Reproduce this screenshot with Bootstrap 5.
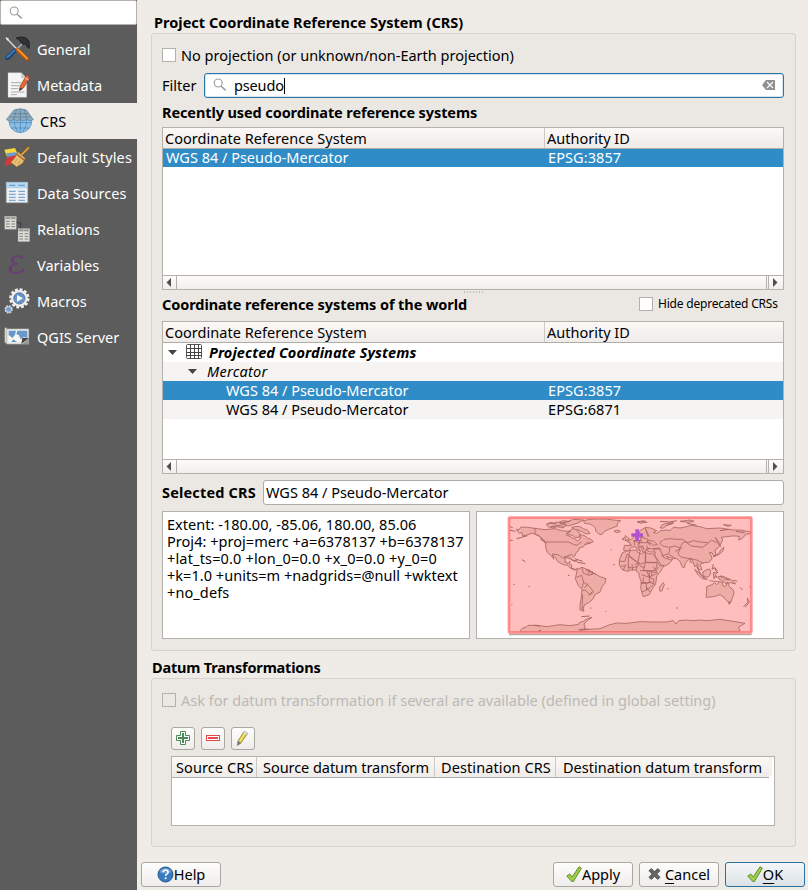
<!DOCTYPE html>
<html lang="en">
<head>
<meta charset="utf-8">
<title>Project Properties | CRS</title>
<link href="https://cdn.jsdelivr.net/npm/bootstrap@5.3.0/dist/css/bootstrap.min.css" rel="stylesheet">
<style>
body{width:808px;height:890px;overflow:hidden;background:#efebe7;color:#000;font:14.5px/18px "Noto Sans","Open Sans",sans-serif}
.side{width:137px;background:#5c5c5c;color:#fff;flex:none}
.side-search{width:137px;height:25px;border:1px solid #b6b1ab;border-radius:2px;background:#fff;padding-left:8px}
.side-list{margin-top:6px}
.side-item{height:36px;padding-left:3px;gap:6px;white-space:nowrap}
.side-item svg{width:28px;height:28px;flex:none}
.side-item.on{background:#efebe7;color:#000;padding-left:6px}
.pane{width:671px;padding:13px 12px 0 14px}
.ttl{height:20px;padding-left:3px}
.t{white-space:nowrap;display:inline-block}
.grp{border:1px solid #d6d2cd;border-radius:3px;background:#ebe8e3;padding:0 11px 0 10px}
.box{width:14px;height:14px;border:1px solid #b4b0ac;background:#fff;flex:none}
.fld{height:25px;border:1px solid #aeaaa5;border-radius:3px;background:#fff}
.fld.act{border-color:#2a76a8;box-shadow:inset 0 0 0 1px #d5e4ee}
.grid{border:1px solid #b4b0ac;background:#fff}
.hd{height:21px;background:linear-gradient(#fbf8f6,#eeebe8);border-bottom:1px solid #b0aca8;flex:none}
.hd>div{height:20px;border-right:1px solid #ccc8c4;padding-left:2px;line-height:20px}
.hd>div:last-child{border-right:0}
.rw{height:19px;line-height:19px}
.r18{height:18px;line-height:16px}
.c1{width:382px;flex:none}
.p3{padding-left:3px}
.p63{padding-left:63px}
.alt{background:#f6f4f2}
.sel{background:#308cc6;color:#fff}
.sb{height:14px;border-top:1px solid #b4b0ac;background:linear-gradient(#fdfcfb,#f1efec)}
.sb .l,.sb .r{width:14px;border-right:1px solid #b4b0ac}
.sb .r{width:17px;border-right:0;border-left:1px solid #b4b0ac;padding-left:1px}
.sb .r i{width:1px;height:13px;background:#b4b0ac;margin-right:4px;flex:none}
.sb svg{display:block;flex:none}
.ink{border:1px solid #aaa6a1;border-radius:3px;background:linear-gradient(#fdfdfc,#efedeb)}
.tool{width:24px;height:23px}
.dlg{width:80px;height:25px;padding-bottom:1px}
.dlg.def{border-color:#2a6f9e;background:linear-gradient(#f4f6f7,#dbe3e8)}
.dots{height:2px;width:19px;margin-top:1px;background:repeating-linear-gradient(90deg,#c2beb9 0 1px,transparent 1px 3px)}
u{text-underline-offset:3px;text-decoration-thickness:1px}
.g1{height:618px;padding-top:14px}
.r-np{height:14px;gap:5px}
.r-filter{height:25px;margin-top:11px}
.r-filter .k2{width:42px;padding-bottom:1px}
.fld .t{padding-bottom:1px}
.mag{margin:0 7px 1px 8px}
.caret{width:1px;height:16px;background:#000}
.clr{margin:0 8px 1px 0}
.r-rec{height:29px;padding-top:5px}
.tab1{height:163px}
.tab2{height:153px}
.r-wld{height:22px;margin-bottom:6px}
.r-wld .box{margin-right:5px}
.r-sel{height:25px;margin-top:6px}
.r-sel>.t{padding-bottom:1px}
.selfld{width:521px;padding-left:2px}
.r-info{height:128px;margin-top:6px}
.info{width:308px;padding:4px 0 0 4px;line-height:17px}
.mapbox{width:308px}
.r-dat{height:27px;padding:7px 0 0 1px}
.g2{height:169px;padding-top:14px}
.r-ask{height:14px;gap:5px;color:#bcb8b5}
.r-tools{margin:20px 0 6px 9px;gap:6px}
.tab3{width:604px;height:70px;margin-left:9px}
.tab3 .hd{width:597px;box-shadow:4px -1px 0 -1px #f4f1ef}
.tab3 .h1c{width:85px;padding-left:4px}
.tab3 .h2c{width:178px;padding-left:6px}
.tab3 .h3c{width:121px;padding-left:6px}
.tab3 .h4c{padding-left:7px}
.r-btn{margin:15px -9px 0 -10px;gap:6px}
/* per-label tracking */
.ks{letter-spacing:.14px}
.k0{letter-spacing:.02px}
.k3{letter-spacing:-.15px}
.k4{letter-spacing:-.1px}
.k5{letter-spacing:.04px}
.k8{letter-spacing:.08px}
.k9{letter-spacing:-.08px}
.k10{width:126px;font-size:12px;letter-spacing:-.2px;padding-bottom:1px}
.k11{letter-spacing:.09px}
.k12{letter-spacing:.25px}
.k13{letter-spacing:.17px}
.k14{letter-spacing:.03px}
.k15{letter-spacing:.04px}
.k16{letter-spacing:.16px}
.k18{letter-spacing:.1px}
.k19{letter-spacing:-.19px}
.k21{letter-spacing:.1px}
.k22{letter-spacing:-.05px}
</style>
</head>
<body>
<div class="d-flex h-100">
<aside class="side d-flex flex-column">
 <div class="side-search d-flex align-items-center"><svg width="14" height="14" viewBox="0 0 14 14" fill="none" stroke="#999" stroke-width="1.1"><circle cx="5.2" cy="5" r="4"/><path d="M8.2 8.2 12.7 12.4" stroke-width="1.5"/></svg></div>
 <div class="side-list">
  <div class="side-item d-flex align-items-center"><svg viewBox="9 105 84 84"><path d="M18 113 54 151" stroke="#ddd" stroke-width="4"/><path d="M17 112l10 4-5 6z" fill="#eee"/><path d="M70 128 48 150" stroke="#aaa" stroke-width="5"/><path d="M44 152 22 174" stroke="#173f70" stroke-width="13" stroke-linecap="round"/><path d="M44 151 22 172" stroke="#3d79bd" stroke-width="6" stroke-linecap="round"/><path d="M53 150 81 177" stroke="#c85500" stroke-width="11" stroke-linecap="round"/><path d="M54 148 81 175" stroke="#ff9a2c" stroke-width="5" stroke-linecap="round"/><path d="M48 114q16-6 29-1 9 5 11 14v18l-8-5-3-9-8 3-8-8-4-7z" fill="#2e3436" stroke="#151819" stroke-width="2"/></svg><span class="t">General</span></div>
  <div class="side-item d-flex align-items-center"><svg viewBox="9 213 84 84"><path d="M24 218h40l16 17v57H24z" fill="#f5f5f5" stroke="#bbb"/><path d="M63 218v17h17z" fill="#ccc"/><path d="M33 248h30M33 257h26M33 266h22M33 276h40M33 284h18" stroke="#aaa" stroke-width="3"/><path d="M80 225 61 257 58 272 71 263 90 232z" fill="#e06a35" stroke="#943a18" stroke-width="2"/><path d="M75 234 86 240" stroke="#ffd2b6" stroke-width="3"/><path d="m58 272 2-9 7 4z" fill="#333"/></svg><span class="t">Metadata</span></div>
  <div class="side-item on d-flex align-items-center"><svg viewBox="18 321 84 84"><circle cx="61" cy="364" r="34" fill="#8dc0e8" stroke="#4b8cc0" stroke-width="2"/><path d="M27 368h68M33 384h56M61 340v58M42 360q0 22 12 36M80 360q0 22-12 36" fill="none" stroke="#417fb1" stroke-width="2"/><path d="M42 330q19-7 37 0l21 29-11 3-9-4-10 5-9-4-10 4-9-5-11 5-12-4z" fill="#90abbb" stroke="#537c98" stroke-width="2"/><path d="M36 341h50M28 351h65M61 328v31M50 328l-9 30M72 328l9 30" fill="none" stroke="#537c98" stroke-width="2"/></svg><span class="t">CRS</span></div>
  <div class="side-item d-flex align-items-center"><svg viewBox="9 429 84 84"><path d="M13 449l32-5 8 18-33 7z" fill="#f5d63c"/><path d="M19 460l30-3 4 14-30 7z" fill="#6a9bd2"/><path d="M22 471l26-5-2 24-33 7z" fill="#d93636"/><path d="M64 465 86 443" stroke="#8a5d18" stroke-width="9" stroke-linecap="round"/><path d="M64 465 85 444" stroke="#dfa94e" stroke-width="5" stroke-linecap="round"/><path d="M54 455 76 475 68 490 50 501 32 487 43 475z" fill="#e6bd75" stroke="#8a602b" stroke-width="2"/><path d="m49 461 23 19" stroke="#9c5f34" stroke-width="4"/><path d="M44 487l8-10M53 492l7-9" stroke="#b98c49" stroke-width="2"/></svg><span class="t ks">Default Styles</span></div>
  <div class="side-item d-flex align-items-center"><svg viewBox="9 12 84 84"><path d="M19 22h64v61H19z" fill="#eef0f1" stroke="#aeb4b8" stroke-width="2"/><path d="M19 22h64v16H19z" fill="#b6d8f0" stroke="#6fa7cf" stroke-width="1"/><path d="M28 31h18M55 31h20" stroke="#588fc0" stroke-width="3"/><path d="M27 49h20M27 58h20M27 67h20M27 76h20M55 49h20M55 58h20M55 67h20M55 76h20" stroke="#7ba8d4" stroke-width="3.500"/></svg><span class="t">Data Sources</span></div>
  <div class="side-item d-flex align-items-center"><svg viewBox="9 120 84 84"><path d="M49 143h13v22" fill="none" stroke="#333f4c" stroke-width="3"/><g id="tb"><path d="M14 124h35v39H14z" fill="#deded9" stroke="#888"/><path d="M14 124h35v9H14z" fill="#b9b9b4"/><path d="M18 129h11M34 129h11M18 139h11M34 139h11M18 147h11M34 147h11M18 155h11M34 155h11" stroke="#85857f" stroke-width="3"/></g><use href="#tb" x="40" y="37"/></svg><span class="t">Relations</span></div>
  <div class="side-item d-flex align-items-center"><svg viewBox="9 228 84 84"><path d="M67 251q-5-9-17-8-15 2-14 13 2 10 17 11-23 1-24 14 1 14 18 14 16-1 22-11" fill="none" stroke="#6a3a78" stroke-width="5"/><path d="M38 250v12M32 276v12" stroke="#6a3a78" stroke-width="6"/><path d="M66 242v11M70 280l-3 10" stroke="#6a3a78" stroke-width="4"/></svg><span class="t">Variables</span></div>
  <div class="side-item d-flex align-items-center"><svg viewBox="9 336 84 84"><ellipse cx="66" cy="397" rx="22" ry="5" fill="#444" opacity=".4"/><circle cx="58" cy="370" r="26" fill="none" stroke="#eee" stroke-width="9" stroke-dasharray="8.5 5.1"/><circle cx="58" cy="370" r="21" fill="#6794c9" stroke="#eee" stroke-width="8"/><circle cx="58" cy="370" r="17" fill="none" stroke="#365f96" stroke-width="2"/><path d="m51 360 18 10-18 10z" fill="#fff"/><circle cx="26" cy="403" r="10" fill="#6794c9" stroke="#ddd" stroke-width="5" stroke-dasharray="5 2.8"/><circle cx="26" cy="403" r="8" fill="#6e9dd2" stroke="#ddd" stroke-width="2"/></svg><span class="t">Macros</span></div>
  <div class="side-item d-flex align-items-center"><svg viewBox="9 444 84 84"><path d="M14 458h7v3h66v47H21l-7-6z" fill="#e9e9e6" stroke="#777" stroke-width="2"/><path d="M26 467h56v34H26z" fill="#f7f7f5"/><path d="M26 467h22l-3 12-8 10-11-9zM52 467h30v21l-11-3-9 8-5-12-8-4zM34 501l6-8 11 8z" fill="#6797cb"/><path d="M20 461v46" stroke="#999" stroke-width="2"/><path d="M64 507 67 488 87 489z" fill="#444"/><path d="M67 507 87 489v18z" fill="#999"/></svg><span class="t">QGIS Server</span></div>
 </div>
</aside>
<main class="pane d-flex flex-column">
 <div class="fw-bold ttl"><span class="t k0">Project Coordinate Reference System (CRS)</span></div>
 <section class="grp g1">
  <div class="d-flex align-items-center r-np"><span class="box"></span><span class="t">No projection (or unknown/non-Earth projection)</span></div>
  <div class="d-flex align-items-center r-filter"><span class="t k2">Filter</span><div class="fld act d-flex align-items-center flex-grow-1"><svg class="mag" width="14" height="14" viewBox="0 0 14 14" fill="none" stroke="#999" stroke-width="1.1"><circle cx="5.2" cy="5" r="4"/><path d="M8.2 8.2 12.7 12.4" stroke-width="1.5"/></svg><span class="t k3">pseudo</span><span class="caret"></span><svg class="ms-auto clr" width="13" height="10" viewBox="0 0 13 10"><path d="M4 0h9v10H4L0 5z" fill="#8f8f8f"/><path d="m5 2 6 6m0-6-6 6" stroke="#fff" stroke-width="1.1"/></svg></div></div>
  <div class="fw-bold r-rec"><span class="t k4">Recently used coordinate reference systems</span></div>
  <div class="grid d-flex flex-column tab1">
   <div class="hd d-flex"><div class="c1"><span class="t k5">Coordinate Reference System</span></div><div><span class="t">Authority ID</span></div></div>
   <div class="rw sel d-flex r18"><div class="c1 p3"><span class="t">WGS 84 / Pseudo-Mercator</span></div><div class="p3"><span class="t k8">EPSG:3857</span></div></div>
   <div class="sb mt-auto d-flex"><div class="l"><svg width="13" height="13" viewBox="0 0 13 13"><path d="M8 2v9L3.500 6.500z" fill="#505050"/></svg></div><div class="r ms-auto d-flex"><i></i><svg width="9" height="13" viewBox="0 0 9 13"><path d="M0 2v9l4.500-4.500z" fill="#505050"/></svg></div></div>
  </div>
  <div class="dots mx-auto"></div>
  <div class="d-flex align-items-center r-wld"><b class="t k9">Coordinate reference systems of the world</b><span class="box ms-auto"></span><span class="t k10">Hide deprecated CRSs</span></div>
  <div class="grid d-flex flex-column tab2">
   <div class="hd d-flex"><div class="c1"><span class="t k5">Coordinate Reference System</span></div><div><span class="t">Authority ID</span></div></div>
   <div class="rw d-flex align-items-center"><svg width="46" height="19" viewBox="0 0 46 19"><path d="M5 7h9l-4.500 5z" fill="#444"/><rect x="23.500" y="1.500" width="15" height="14" rx="1" fill="#fff" stroke="#555"/><path d="M27.500 1v15M31.500 1v15M35.500 1v15M23 5.500h16M23 9.500h16M23 12.500h16" stroke="#444"/></svg><b class="t k11 fst-italic">Projected Coordinate Systems</b></div>
   <div class="rw alt d-flex align-items-center"><svg width="44" height="19" viewBox="0 0 44 19"><path d="M25 7h9l-4.500 5z" fill="#444"/></svg><i class="t k12">Mercator</i></div>
   <div class="rw sel d-flex"><div class="c1 p63"><span class="t">WGS 84 / Pseudo-Mercator</span></div><div class="p3"><span class="t k8">EPSG:3857</span></div></div>
   <div class="rw alt d-flex"><div class="c1 p63"><span class="t">WGS 84 / Pseudo-Mercator</span></div><div class="p3"><span class="t k8">EPSG:6871</span></div></div>
   <div class="sb mt-auto d-flex"><div class="l"><svg width="13" height="13" viewBox="0 0 13 13"><path d="M8 2v9L3.500 6.500z" fill="#505050"/></svg></div><div class="r ms-auto d-flex"><i></i><svg width="9" height="13" viewBox="0 0 9 13"><path d="M0 2v9l4.500-4.500z" fill="#505050"/></svg></div></div>
  </div>
  <div class="d-flex align-items-center r-sel"><b class="t k13">Selected CRS</b><div class="fld ms-auto d-flex align-items-center selfld"><span class="t">WGS 84 / Pseudo-Mercator</span></div></div>
  <div class="d-flex justify-content-between r-info">
   <div class="grid info"><div><span class="t k14">Extent: -180.00, -85.06, 180.00, 85.06</span></div><div><span class="t k15">Proj4: +proj=merc +a=6378137 +b=6378137</span></div><div><span class="t k16">+lat_ts=0.0 +lon_0=0.0 +x_0=0.0 +y_0=0</span></div><div><span class="t k15">+k=1.0 +units=m +nadgrids=@null +wktext</span></div><div><span class="t k18">+no_defs</span></div></div>
   <div class="grid mapbox"><svg class="d-block" width="306" height="126" viewBox="-69 12 918 378">
    <path d="M27 379H755" stroke="#b9aaa0" stroke-width="5"/>
    <rect x="26" y="29" width="728" height="344" fill="#ffbebe"/>
    <g fill="#efaba5" stroke="#a8655f" stroke-width="2.500" stroke-linejoin="round">
     <path d="M50 63 57 66 62 58 75 57 105 61 135 65 165 62 185 68 205 70 222 60 232 64 234 72 240 76 238 88 226 88 218 82 204 80 202 76 212 70 204 72 198 80 214 88 228 94 232 100 238 95 242 88 240 80 252 82 262 90 272 94 280 101 268 106 262 103 256 108 250 116 238 120 236 128 228 134 226 142 220 148 216 140 205 142 196 150 195 162 204 166 210 160 208 168 216 172 214 180 226 184 232 182 225 187 210 180 204 172 190 170 172 160 168 150 157 141 162 154 154 144 142 133 137 118 137 103 120 85 104 78 94 76 84 80 68 84 66 74 58 76 52 70z"/>
     <path d="M105 60v18l12 6 20 18H205l18 8 8 2 10-8 4-2M156 138l20 3 14 10 6-2" fill="none"/>
     <path d="M140 50 150 44 160 48 168 42 178 44 186 48 195 46 198 54 186 60 172 56 158 60 144 56zM178 42 190 38 205 40 220 34 250 36 240 42 225 48 216 50 205 54 190 49zM215 58 226 56 238 55 250 62 262 66 270 76 258 78 248 72 235 66 224 64z"/>
     <path d="M250 38 270 34 290 33 320 33 340 36 362 38 352 46 352 54 342 58 326 64 314 70 306 80 296 78 288 70 286 60 278 52 268 48 254 46z"/>
     <path d="M342 69l14-3 5 5-12 3zM192 147l14-3 10 10-8-2zM214 155l18 4-9 1z"/>
     <path d="M232 184 246 178 256 182 268 186 276 192 290 200 300 206 318 212 316 224 306 236 302 248 298 254 286 258 280 270 274 278 266 284 254 290 250 300 252 310 240 306 240 290 244 268 246 244 236 234 226 212z"/>
     <path d="M246 178l4 18 18 6 14-6 8 4M229 208l16-6 6 20 16 12 14 18-10 8-16-14-8 2M248 260l-2 46M251 222l-6 20M268 186l-2 14M278 190l-2 10M254 240l10-14M276 252l-12 12" fill="none"/>
     <path d="M60 369 68 360 78 358 84 352 110 352 140 356 180 350 210 353 235 349 238 344 250 340 262 332 276 328 262 338 252 348 256 362 240 366 300 362 330 350 350 345 380 346 420 341 460 342 500 342 520 338 528 348 536 338 560 336 580 338 600 336 620 338 660 334 680 337 700 340 735 346 715 358 720 367 720 370 60 371z"/>
     <path d="M371 127 373 112 390 113 390 104 380 100 394 94 402 86 410 84 418 88 430 86 420 80 418 70 436 58 452 60 470 68 460 74 470 76 482 68 500 66 510 68 520 58 540 60 560 56 572 52 600 56 620 62 660 60 700 66 720 66 754 72 750 78 738 78 730 88 722 94 716 96 718 86 710 84 696 84 680 86 664 88 668 96 662 108 654 120 645 126 648 142 642 146 636 134 628 134 634 144 636 152 628 162 605 166 600 170 606 184 598 186 590 172 584 176 578 158 570 152 564 156 556 166 552 180 546 176 540 160 530 152 514 150 508 148 500 144 510 156 518 154 506 168 490 176 484 172 474 156 464 142 466 132 450 132 440 128 450 120 438 124 436 132 428 132 424 120 414 116 422 130 412 124 406 116 394 118 384 130z"/>
     <path d="M374 98l10-2 4-4-8-6-4-4-2 8 4 4zM366 94l6-4-1 6z"/>
     <path d="M412 42l20-4 6 4-16 4zM480 60 486 50 500 46 520 44 504 50 490 60zM540 40l30-4 12 4-20 3zM670 50l24 2-10 3zM645 88 655 100 662 116 658 112zM640 146 656 136 662 126 672 118 668 130 656 140z"/>
     <path d="M367 134 380 130 390 127 410 126 412 132 424 138 432 132 450 138 462 138 466 148 474 164 480 174 492 172 482 190 470 204 468 222 464 232 456 244 448 260 430 266 426 254 422 240 424 222 418 206 416 194 404 186 392 186 384 190 368 186 358 172 358 156z"/>
     <path d="M357 160h18l6-22 34 26v10l-18 6-12-2v-32M390 127l-4 18 34 24 16-6v-30M420 130l-6 34M437 136v28h34M437 163h34M436 163l-6 24 20 2 20 6M420 188h28v36h-26M450 189l16-2 6-22M424 226l14 0 2 20-14 6M440 246l20-16M448 222l18 8M424 200l26 8M378 168l-8 18M396 168l2 20M404 170l16-5M440 188l8 20 18-10M458 176l10 12M430 208v18M410 176l-2 12M386 172v14M362 174h12M448 208l14 6-2 12M438 226l18-4M440 238l10 14M420 174l14 6M476 176l-8 12 4 10M456 190l-2 14" fill="none"/>
     <path d="M478 238 490 224 493 230 486 248 480 250zM584 184 594 192 602 200 612 210 622 214 606 212 594 200zM608 192l14-8 8 0 2 14-8 10-14-4zM640 194l14-2-8 8 6 8-8-2-2 6zM640 168l-4 16 8-4 6 12M655 206l12-2 14 6 14 6 12 12-16-4-12 4-14-12-8-2zM628 218l34 4"/>
     <path d="M620 236 636 230 644 224 650 230 658 222 668 222 668 232 676 236 682 222 688 236 700 246 702 258 696 272 694 280 686 282 676 274 672 268 660 260 640 266 618 268 620 254zM684 284l8 0-4 5zM730 296l14-14-2-12 6 12-12 16"/>
     <path d="M486 100 492 94 512 92 530 94 548 94 560 104 570 102 580 98 600 102 626 104 634 96 650 104M484 98l-4 8 8 8 18 4 20-4 14 6 8-16 12-4M540 120l-6 18 10 10 26 4 20 4 20 10M560 104l14 10 34 4 16-12M510 118l-4 20 20 14M480 122l10 26 16 6M484 144l20-6M412 112l10-8 20 0 10 8M424 104l-2-16 22 6-2 10M404 112l-2-14 18 8M400 98l24 0M444 96l18 4 10 10-16 2M444 86l-8-24M436 60l12 26M464 130l-4-8 20-2M575 150l-6 12 8 2M526 130l20-10M450 122l32 2M396 112l-6-2M428 112l4 14M440 112l2 12M416 112l14 6M590 164l6 12" fill="none"/>
    </g>
    <g fill="none" stroke="#a8655f" stroke-width="3"><path d="M50 92l12-3 20-6M28 66l18 4M28 55l10 4M66 155l10 6M40 229h4M86 236h4M34 290h3M204 202h5M30 97h8M332 124l3 2M340 170h5M270 300h4M316 310h3M114 370l10-4M502 242h4M528 300h5M720 238l8 8M748 236h4M244 326l24-2M140 48l16-4 14 4M152 56l30-4 10 8M180 46l30-6M412 40l30 3M480 40l30 2 20-4M500 52l20-6M224 152l24 8M232 163l24 4M120 92l18 14M258 186l20 8M256 110l16-6M100 352l20 2M236 366l30-3M420 96l-4 12M440 100l16 8M590 176l12 22 14 14M660 204l10 6M672 212l16 4M644 178l8 10M700 217l12 3M562 46l28 6M660 68l26-4M708 70l26 4"/></g>
    <rect x="27" y="29" width="727" height="344" rx="2" fill="none" stroke="#ff7777" stroke-opacity=".8" stroke-width="8"/>
    <path d="M394 81h35M411.500 64v35" stroke="#b451d0" stroke-width="11"/></svg></div>
  </div>
 </section>
 <div class="fw-bold r-dat"><span class="t k19">Datum Transformations</span></div>
 <section class="grp g2">
  <div class="d-flex align-items-center r-ask"><span class="box bg-transparent"></span><span class="t">Ask for datum transformation if several are available (defined in global setting)</span></div>
  <div class="d-flex r-tools">
   <div class="ink tool"><svg class="d-block" width="22" height="21" viewBox="0 0 22 21"><path d="M8.500 3.500h5v4h4v5h-4v4h-5v-4h-4v-5h4z" fill="#fff" stroke="#4b8a56"/><path d="M6 10h10M11 5v10" stroke="#4b8a56" stroke-width="2"/></svg></div>
   <div class="ink tool"><svg class="d-block" width="22" height="21" viewBox="0 0 22 21"><rect x="4.500" y="7.500" width="13" height="5" fill="#fff" stroke="#e34b4b"/><path d="M6 10h10" stroke="#e34b4b" stroke-width="2"/></svg></div>
   <div class="ink tool"><svg class="d-block" width="22" height="21" viewBox="0 0 22 21"><path d="M12 3.500 6 13l-.7 4.500L9 15l6.500-9.500z" fill="#e0ca3e" stroke="#8f8540" stroke-width=".8"/><path d="m12 3 4 2-1 2-4-2z" fill="#ddd" stroke="#aaa" stroke-width=".5"/><path d="M6 13l-.7 4.500L9 15z" fill="#777"/><path d="m8 13 5-8" stroke="#fff39a"/></svg></div>
  </div>
  <div class="grid tab3">
   <div class="hd d-flex"><div class="h1c"><span class="t k21">Source CRS</span></div><div class="h2c"><span class="t k22">Source datum transform</span></div><div class="h3c"><span class="t k21">Destination CRS</span></div><div class="h4c"><span class="t">Destination datum transform</span></div></div>
  </div>
 </section>
 <div class="d-flex r-btn">
  <div class="ink dlg d-flex align-items-center justify-content-center"><svg width="17" height="17" viewBox="0 0 17 17"><circle cx="8.500" cy="8.500" r="7.500" fill="#3a7bbd" stroke="#235789"/><path d="M2.500 6a6.500 6 0 0 1 12 0q-6 3-12 0z" fill="#8ab6e0" opacity=".6"/><path d="M6 6.300q.2-2.300 2.600-2.300 2.500.1 2.500 2.200 0 1.300-1.400 2-1.100.6-1.100 1.800" fill="none" stroke="#fff" stroke-width="1.500"/><circle cx="8.600" cy="12.300" r="1" fill="#fff"/></svg><span class="t">Help</span></div>
  <div class="ink dlg ms-auto d-flex align-items-center justify-content-center"><svg width="16" height="17" viewBox="0 0 16 17"><path d="m.8 10 3-2 2.400 3L13 .8l2.400 1.400-8 13.300H5.800z" fill="#a4cf45" stroke="#54802a" stroke-width=".9"/></svg><span class="t">Apply</span></div>
  <div class="ink dlg d-flex align-items-center justify-content-center"><svg class="me-1" width="13" height="14" viewBox="0 0 14 14"><path d="m1 3.500 2.500-2.300L7 4.300l3.500-3.100L13 3.500 9.500 7l3.500 3.500-2.500 2.300L7 9.700l-3.500 3.100L1 10.500 4.500 7z" fill="#666" stroke="#444" stroke-width=".8"/></svg><span class="t"><u>C</u>ancel</span></div>
  <div class="ink dlg def d-flex align-items-center justify-content-center"><svg width="16" height="17" viewBox="0 0 16 17"><path d="m.8 10 3-2 2.400 3L13 .8l2.400 1.400-8 13.300H5.800z" fill="#a4cf45" stroke="#54802a" stroke-width=".9"/></svg><span class="t"><u>O</u>K</span></div>
 </div>
</main>
</div>
<script src="https://cdn.jsdelivr.net/npm/bootstrap@5.3.0/dist/js/bootstrap.bundle.min.js"></script>
</body>
</html>
